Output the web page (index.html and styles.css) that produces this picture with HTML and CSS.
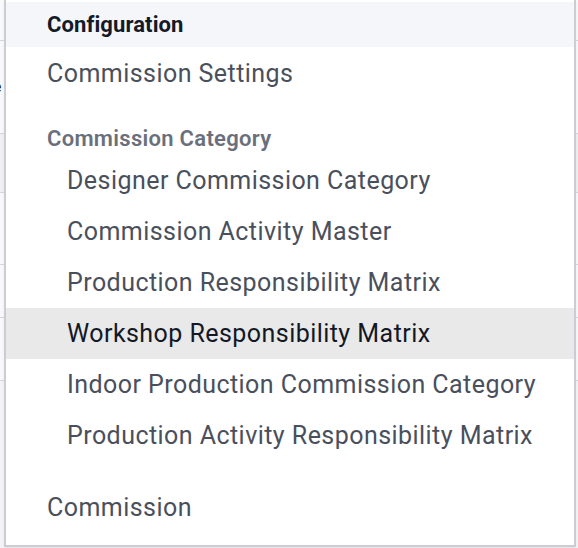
FILE: index.html
```html
<!DOCTYPE html>
<html>
<head>
<meta charset="utf-8">
<link rel="stylesheet" href="styles.css">
</head>
<body>
<div class="page">
  <div class="table">
    <div class="row r1"></div>
    <div class="row r2"><span class="cell-text">e</span></div>
    <div class="row r3"></div>
    <div class="row r4"></div>
    <div class="row r5"></div>
    <div class="row r6"></div>
  </div>
  <div class="dropdown">
    <div class="dd-header">Configuration</div>
    <div class="dd-item top first">Commission Settings</div>
    <div class="dd-section">Commission Category</div>
    <div class="dd-item sub">Designer Commission Category</div>
    <div class="dd-item sub">Commission Activity Master</div>
    <div class="dd-item sub">Production Responsibility Matrix</div>
    <div class="dd-item sub active">Workshop Responsibility Matrix</div>
    <div class="dd-item sub">Indoor Production Commission Category</div>
    <div class="dd-item sub">Production Activity Responsibility Matrix</div>
    <div class="dd-item top last">Commission</div>
  </div>
</div>
</body>
</html>
```
FILE: styles.css
```css
html, body {
  margin: 0;
  padding: 0;
}
body {
  width: 578px;
  height: 548px;
  overflow: hidden;
  background: #f4f4f6;
  font-family: Roboto, "Noto Sans", "Liberation Sans", sans-serif;
}
.page {
  position: relative;
  width: 578px;
  height: 548px;
}
.table {
  display: flex;
  flex-direction: column;
}
.row {
  background: #f9f9fb;
  border-bottom: 1px solid #d6d7dc;
  font-size: 14px;
  color: #1f2430;
  display: flex;
  align-items: center;
}
.r1 { height: 40px; }
.r2 { height: 92px; }
.r3 { height: 58px; background: #f0f0f2; }
.r4 { height: 71px; }
.r5 { height: 52px; }
.r6 { height: 62px; }
.cell-text {
  margin-left: -6px;
}
.dropdown {
  position: absolute;
  left: 4px;
  top: 0;
  width: 568px;
  height: 543px;
  background: #fff;
  border: 2px solid #cbcdd2;
  border-top: none;
  padding-top: 2px;
  box-shadow: 0 2px 3px rgba(0,0,0,0.06);
  display: flex;
  flex-direction: column;
}
.dd-header {
  height: 45px;
  background: #f5f6f9;
  padding-left: 41px;
  display: flex;
  align-items: center;
  font-size: 22px;
  font-weight: 700;
  letter-spacing: 0.1px;
  color: #141a28;
}
.dd-item {
  height: 51px;
  display: flex;
  align-items: center;
  font-size: 25px;
  letter-spacing: 0.45px;
  color: #4a4f5c;
}
.dd-item.top {
  padding-left: 41px;
}
.dd-item.first {
  margin-top: 1px;
}
.dd-item.sub {
  padding-left: 61px;
}
.dd-item.active {
  background: #e9e9ea;
  color: #121826;
}
.dd-section {
  height: 56px;
  padding-left: 41px;
  display: flex;
  align-items: flex-end;
  padding-bottom: 4px;
  box-sizing: border-box;
  font-size: 22px;
  font-weight: 600;
  letter-spacing: 0.3px;
  color: #6b6f7b;
}
.dd-item.last {
  margin-top: 21px;
}
```
